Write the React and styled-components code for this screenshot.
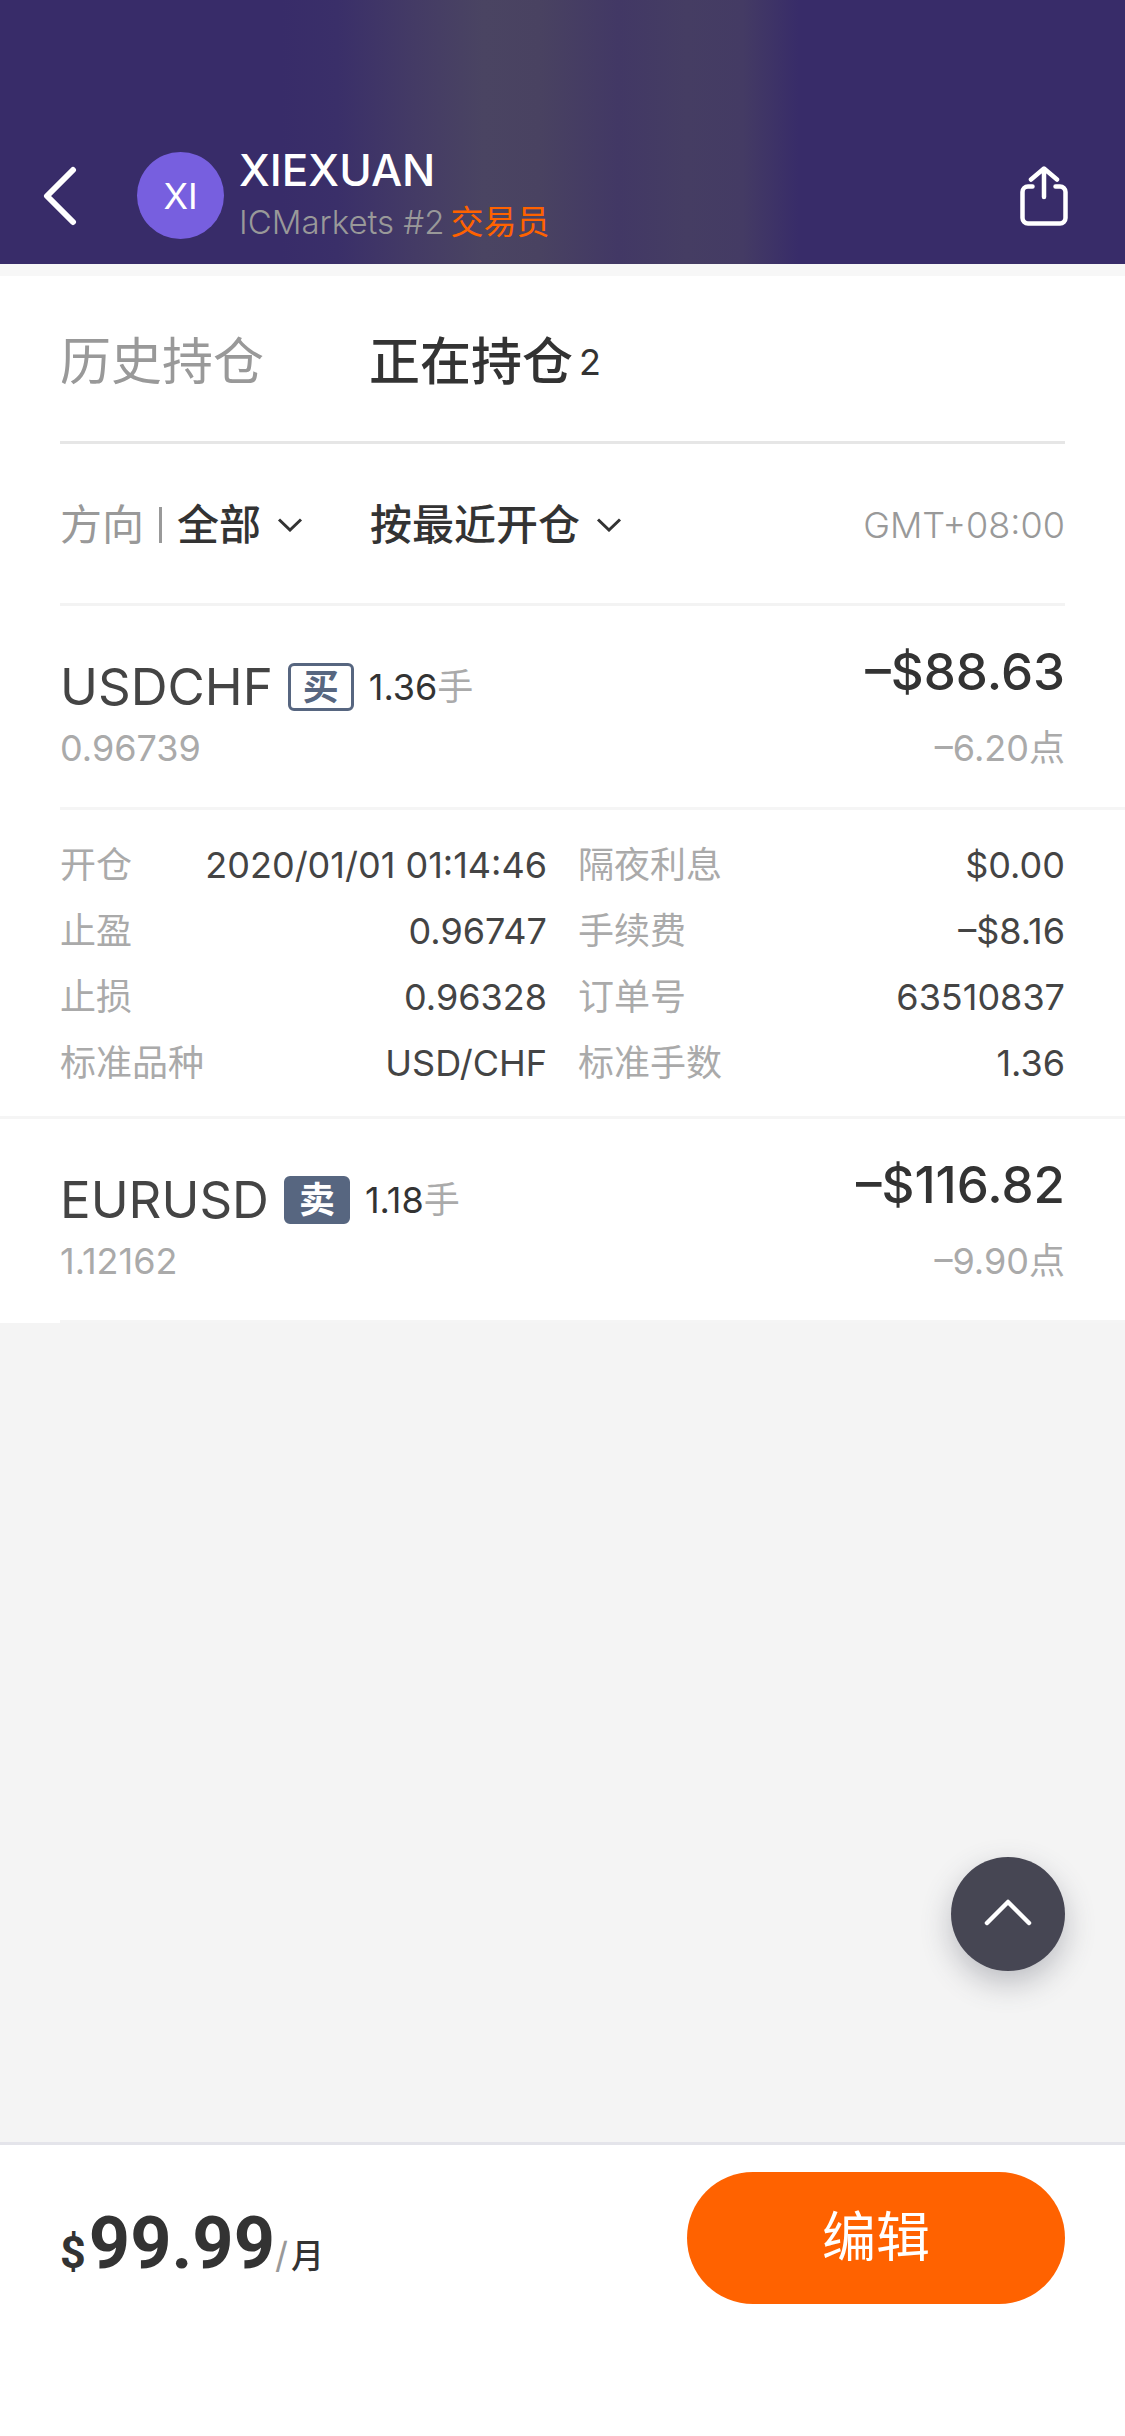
import React from 'react';
import styled, { createGlobalStyle } from 'styled-components';

const GlobalStyle = createGlobalStyle`
  :root {
    --color-header: #382c69;
    --color-text: #333;
    --color-text-2: #444;
    --color-gray-1: #999;
    --color-gray-2: #aaa;
    --color-slate: #576680;
    --color-orange: #ff6200;
    --color-line: #f5f5f5;
    --text-sm: 33px;
    --text-md: 36px;
    --text-lg: 42px;
    --text-xl: 51px;
    --gutter: 60px;
  }

  * {
    box-sizing: border-box;
  }

  body {
    margin: 0;
    background-color: #f4f4f4;
    color: var(--color-text);
    font-family: Inter, 'Noto Sans CJK SC', sans-serif;
    font-size: var(--text-md);
    line-height: 42px;
  }

  button,
  select {
    margin: 0;
    padding: 0;
    border: 0;
    background: none;
    color: inherit;
    font: inherit;
  }
`;

const Page = styled.div`
  display: flex;
  flex-direction: column;
  min-height: 100vh;
`;

const Header = styled.header`
  display: flex;
  align-items: center;
  padding: 127px 57px 0 41px;
  height: 264px;
  background: linear-gradient(
    90deg,
    var(--color-header) 25%,
    #3a2f69 30%,
    #443b65 37%,
    #4a4462 43%,
    #494261 48%,
    #423865 55%,
    #453d63 61%,
    #443b64 66%,
    var(--color-header) 71%
  );
  color: #fff;
`;

const IconButton = styled.button`
  display: flex;
  flex: none;
`;

const Avatar = styled.div`
  display: flex;
  flex: none;
  align-items: center;
  justify-content: center;
  width: 87px;
  height: 87px;
  margin-left: 60px;
  border-radius: 50%;
  background-color: #775fdf;
`;

const Trader = styled.div`
  flex: 1;
  margin-left: 15px;
`;

const Name = styled.h1`
  margin: 0;
  font-weight: 500;
  font-size: 44px;
  line-height: 54px;
`;

const Account = styled.p`
  margin: 0;
  color: var(--color-gray-1);
  font-weight: 300;
  font-size: var(--text-sm);
  line-height: 51px;

  & strong {
    margin-left: 6px;
    color: var(--color-orange);
    font-weight: 400;
  }
`;

const Panel = styled.main`
  border-top: 12px solid #f7f7f7;
  background-color: #fff;
`;

const Tabs = styled.nav`
  display: flex;
  align-items: center;
  gap: 105px;
  height: 168px;
  margin: 0 var(--gutter);
  padding-top: 6px;
  border-bottom: 3px solid #e6e6e6;
`;

const Tab = styled.button`
  display: flex;
  align-items: center;
  gap: 6px;
  color: ${({ $active }) => ($active ? 'var(--color-text)' : 'var(--color-gray-1)')};
  font-weight: ${({ $active }) => ($active ? 500 : 400)};
  font-size: var(--text-xl);
  line-height: 72px;
`;

const Count = styled.span`
  font-weight: 400;
  font-size: var(--text-md);
`;

const Filters = styled.div`
  display: flex;
  align-items: center;
  height: 162px;
  margin: 0 var(--gutter);
  padding-top: 3px;
  border-bottom: 3px solid #f3f3f3;
`;

const Filter = styled.label`
  display: flex;
  align-items: center;
  width: ${({ $width }) => $width};
  color: var(--color-gray-1);
  font-size: var(--text-lg);
  line-height: 60px;
`;

const Separator = styled.span`
  width: 3px;
  height: 36px;
  margin: 0 15px;
  background-color: var(--color-gray-1);
`;

const Select = styled.select`
  appearance: none;
  margin-right: 15px;
  color: var(--color-text);
  font-weight: 500;
  line-height: 60px;
`;

const Zone = styled.span`
  margin-left: auto;
  color: var(--color-gray-1);
  font-weight: 300;
`;

const Position = styled.section`
  display: flex;
  justify-content: space-between;
  height: 204px;
  margin-left: var(--gutter);
  padding-right: var(--gutter);
  border-bottom: 3px solid var(--color-line);
`;

const Side = styled.div`
  display: flex;
  flex-direction: column;
  align-items: ${({ $end }) => ($end ? 'flex-end' : 'flex-start')};
  padding-top: ${({ $end }) => ($end ? '36px' : '51px')};
  gap: ${({ $end }) => ($end ? '16px' : '1px')};
`;

const Line = styled.div`
  display: flex;
  align-items: center;
  height: 60px;
`;

const Symbol = styled.h2`
  margin: 0;
  color: var(--color-text-2);
  font-weight: 400;
  font-size: var(--text-xl);
  line-height: 60px;
`;

const Badge = styled.span`
  display: flex;
  align-items: center;
  justify-content: center;
  width: 66px;
  height: 48px;
  margin: 0 15px;
  border: 3px solid var(--color-slate);
  border-radius: 6px;
  background-color: ${({ $sell }) => ($sell ? 'var(--color-slate)' : '#fff')};
  color: ${({ $sell }) => ($sell ? '#fff' : 'var(--color-slate)')};
  font-weight: 700;
`;

const Lots = styled.span`
  & small {
    color: var(--color-gray-2);
    font-size: inherit;
  }
`;

const Profit = styled.strong`
  font-weight: 500;
  font-size: var(--text-xl);
  line-height: 60px;
`;

const Muted = styled.span`
  color: var(--color-gray-2);
  line-height: 60px;
`;

const Details = styled.dl`
  display: grid;
  grid-template-columns: 1fr 1fr;
  column-gap: 31px;
  margin: 0;
  padding: 22px var(--gutter) 20px;
  border-bottom: 3px solid var(--color-line);
`;

const Detail = styled.div`
  display: flex;
  align-items: center;
  justify-content: space-between;
  height: 66px;

  & dt {
    color: var(--color-gray-2);
  }

  & dd {
    margin: 0;
    color: var(--color-text-2);
  }
`;

const ToTop = styled.button`
  position: fixed;
  right: 60px;
  bottom: 465px;
  display: flex;
  align-items: center;
  justify-content: center;
  width: 114px;
  height: 114px;
  border-radius: 50%;
  background-color: #464653;
  box-shadow: 0 12px 30px rgba(70, 75, 90, 0.32);
`;

const Footer = styled.footer`
  display: flex;
  align-items: flex-start;
  justify-content: space-between;
  height: 294px;
  margin-top: auto;
  padding: 27px var(--gutter) 0;
  border-top: 3px solid #e4e4ea;
  background-color: #fff;
`;

const Price = styled.p`
  display: flex;
  align-items: baseline;
  margin: 27px 0 0;
  font-weight: 500;
  font-size: var(--text-sm);
  line-height: 90px;

  & b {
    font-family: Roboto, sans-serif;
    font-weight: 700;
    font-size: 72px;
  }

  & b:first-child {
    margin-right: 3px;
    font-size: 45px;
  }

  & i {
    margin-right: 3px;
    color: var(--color-gray-1);
    font-style: normal;
    font-weight: 400;
    font-size: var(--text-md);
  }
`;

const EditButton = styled.button`
  width: 378px;
  height: 132px;
  border-radius: 66px;
  background-color: var(--color-orange);
  color: #fff;
  font-size: 54px;
  line-height: 72px;
`;

const Chevron = () => (
  <svg width="26" height="14" viewBox="0 0 26 14" fill="none" stroke="#333" strokeWidth="3">
    <path d="M2 1.5 13 12 24 1.5" />
  </svg>
);

const positions = [
  {
    symbol: 'USDCHF',
    side: '买',
    lots: '1.36',
    price: '0.96739',
    profit: '–$88.63',
    points: '–6.20点',
    details: [
      ['开仓', '2020/01/01 01:14:46'],
      ['隔夜利息', '$0.00'],
      ['止盈', '0.96747'],
      ['手续费', '–$8.16'],
      ['止损', '0.96328'],
      ['订单号', '63510837'],
      ['标准品种', 'USD/CHF'],
      ['标准手数', '1.36'],
    ],
  },
  {
    symbol: 'EURUSD',
    side: '卖',
    lots: '1.18',
    price: '1.12162',
    profit: '–$116.82',
    points: '–9.90点',
  },
];

export default function App() {
  return (
    <Page>
      <GlobalStyle />
      <Header>
        <IconButton aria-label="返回">
          <svg width="36" height="60" viewBox="0 0 36 60" fill="none" stroke="#fff" strokeWidth="6">
            <path d="M32 4 6 30 32 56" strokeLinecap="round" strokeLinejoin="round" />
          </svg>
        </IconButton>
        <Avatar>XI</Avatar>
        <Trader>
          <Name>XIEXUAN</Name>
          <Account>
            ICMarkets #2<strong>交易员</strong>
          </Account>
        </Trader>
        <IconButton aria-label="分享">
          <svg
            width="48"
            height="60"
            viewBox="0 0 48 60"
            fill="none"
            stroke="#fff"
            strokeWidth="4.5"
            strokeLinecap="round"
            strokeLinejoin="round"
          >
            <path d="M12.5 20.5H8A5.5 5.5 0 0 0 2.5 26v26A5.5 5.5 0 0 0 8 57.5h32a5.5 5.5 0 0 0 5.5-5.5V26a5.5 5.5 0 0 0-5.5-5.5h-4.5" />
            <path d="M24 31V3M11 13.500 24 2.500 37 13.500" />
          </svg>
        </IconButton>
      </Header>

      <Panel>
        <Tabs>
          <Tab>历史持仓</Tab>
          <Tab $active>
            正在持仓<Count>2</Count>
          </Tab>
        </Tabs>
        <Filters>
          <Filter $width="310px">
            方向
            <Separator />
            <Select aria-label="方向">
              <option>全部</option>
            </Select>
            <Chevron />
          </Filter>
          <Filter>
            <Select aria-label="排序">
              <option>按最近开仓</option>
            </Select>
            <Chevron />
          </Filter>
          <Zone>GMT+08:00</Zone>
        </Filters>

        {positions.map(({ symbol, side, lots, price, profit, points, details }) => (
          <React.Fragment key={symbol}>
            <Position>
              <Side>
                <Line>
                  <Symbol>{symbol}</Symbol>
                  <Badge $sell={side === '卖'}>{side}</Badge>
                  <Lots>
                    {lots}
                    <small>手</small>
                  </Lots>
                </Line>
                <Muted>{price}</Muted>
              </Side>
              <Side $end>
                <Profit>{profit}</Profit>
                <Muted>{points}</Muted>
              </Side>
            </Position>
            {details && (
              <Details>
                {details.map(([label, value]) => (
                  <Detail key={label}>
                    <dt>{label}</dt>
                    <dd>{value}</dd>
                  </Detail>
                ))}
              </Details>
            )}
          </React.Fragment>
        ))}
      </Panel>

      <ToTop aria-label="回到顶部">
        <svg width="48" height="32" viewBox="0 0 48 32" fill="none" stroke="#fff" strokeWidth="4.5">
          <path d="M3 25 24 4 45 25" strokeLinecap="round" strokeLinejoin="round" />
        </svg>
      </ToTop>

      <Footer>
        <Price>
          <b>$</b>
          <b>99.99</b>
          <i>/</i>月
        </Price>
        <EditButton>编辑</EditButton>
      </Footer>
    </Page>
  );
}
